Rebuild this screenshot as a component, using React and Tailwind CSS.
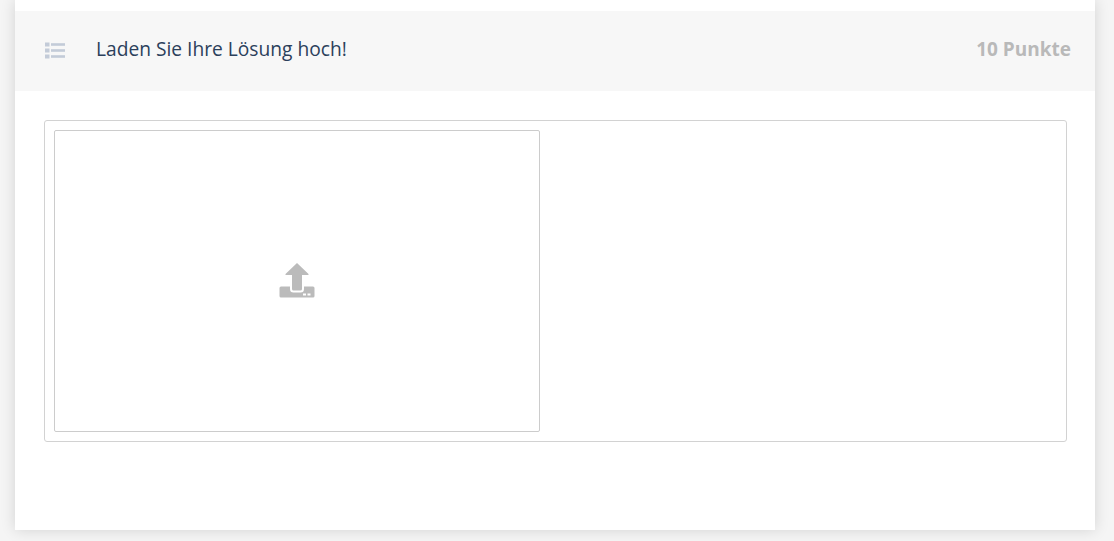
function ListIcon() {
  return (
    <svg width="20" height="18" viewBox="0 0 20 18" className="text-[#c3cbd8]" fill="currentColor">
      <rect x="0" y="0.5" width="4.5" height="4" />
      <rect x="0" y="6.5" width="4.5" height="4" />
      <rect x="0" y="12.5" width="4.5" height="4" />
      <rect x="6" y="1.2" width="14" height="2.6" />
      <rect x="6" y="7.2" width="14" height="2.6" />
      <rect x="6" y="13.2" width="14" height="2.6" />
    </svg>
  );
}

function UploadIcon() {
  return (
    <svg width="36" height="36" viewBox="0 0 36 36" fill="#bbbbbb">
      <path d="M18 0 L29.5 11 Q30 12 29 12 L23 12 L23 26 Q23 27.5 21.5 27.5 L14.5 27.5 Q13 27.5 13 26 L13 12 L7 12 Q6 12 6.5 11 Z" />
      <path d="M2 23.5 L11 23.5 L11 26 Q11 29.5 14.5 29.5 L21.5 29.5 Q25 29.5 25 26 L25 23.5 L34 23.5 Q35.5 23.5 35.5 25 L35.5 33 Q35.5 34.5 34 34.5 L2 34.5 Q0.5 34.5 0.5 33 L0.5 25 Q0.5 23.5 2 23.5 Z" />
      <rect x="24" y="30.5" width="3" height="2" fill="#fff" />
      <rect x="28.5" y="30.5" width="3" height="2" fill="#fff" />
    </svg>
  );
}

export default function App() {
  return (
    <div className="h-[541px] bg-[#f5f5f5] pl-[15px] pr-[19px] font-['Open_Sans',sans-serif] overflow-hidden">
      <div className="h-[530px] bg-white pt-[11px] shadow-[0_0_14px_rgba(0,0,0,0.14)]">
        <div className="h-[80px] bg-[#f7f7f7] flex items-center pl-[30px] pr-[24px]">
          <ListIcon />
          <h2 className="ml-[31px] text-[19.2px] leading-[26px] mb-[4px] text-[#2b405b] flex-1">Laden Sie Ihre Lösung hoch!</h2>
          <span className="text-[19px] leading-[26px] mb-[4px] font-bold text-[#b9b9b9]">10 Punkte</span>
        </div>
        <div className="mt-[29px] mx-[29px] w-[1023px] h-[322px] border border-[#d2d2d2] rounded-[3px] p-[9px]">
          <div className="w-[486px] h-[302px] border border-[#cccccc] rounded-[2px] flex items-center justify-center">
            <UploadIcon />
          </div>
        </div>
      </div>
    </div>
  );
}
